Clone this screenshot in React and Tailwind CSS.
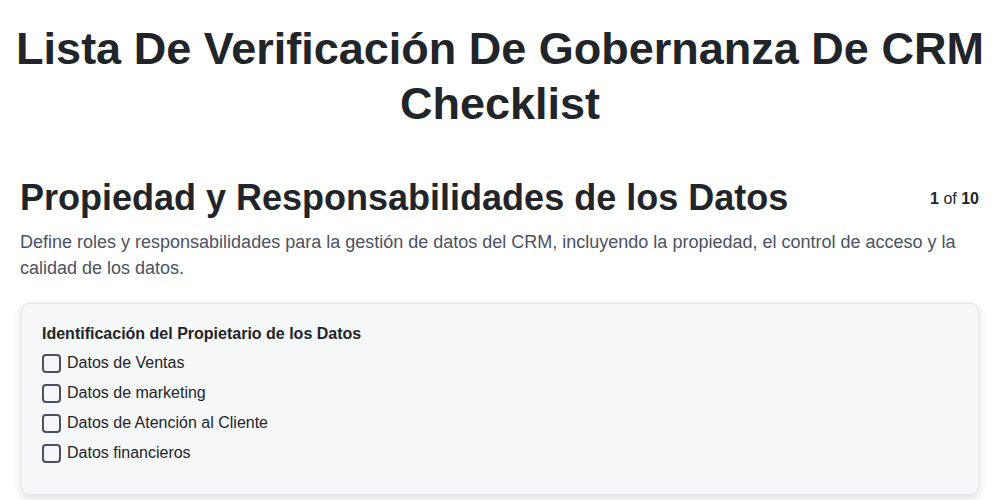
import React, { useState } from 'react';

const items = [
    'Datos de Ventas',
    'Datos de marketing',
    'Datos de Atención al Cliente',
    'Datos financieros',
];

function App() {
    const [checked, setChecked] = useState({});

    const toggle = (i) => setChecked({ ...checked, [i]: !checked[i] });

    return (
        <div className="min-h-screen bg-white text-[#212529] font-['Liberation_Sans',Arial,sans-serif]">
            <div className="px-[20px] pt-[21px]">
                <h1 className="-mx-[12px] text-center text-[45px] font-bold leading-[55px]">
                    Lista De Verificación De Gobernanza De CRM Checklist
                </h1>

                <div className="mt-[45px] flex items-center justify-between">
                    <h2 className="text-[36px] font-bold leading-[43px]">
                        Propiedad y Responsabilidades de los Datos
                    </h2>
                    <div className="text-[16px] pr-[1px] pt-[2px]">
                        <span className="font-bold">1</span> of <span className="font-bold">10</span>
                    </div>
                </div>
                <p className="mt-[10px] text-[18px] leading-[26px] text-[#4a5263]">
                    Define roles y responsabilidades para la gestión de datos del CRM, incluyendo la propiedad, el control de acceso y la calidad de los datos.
                </p>

                <div className="mt-[22px] mx-[1px] rounded-lg border border-[#e3e5ea] bg-[#f6f7f9] px-[20px] pt-[20px] pb-[26px] shadow-[0_3px_10px_rgba(0,0,0,0.14)]">
                    <div className="text-[16px] font-bold leading-[20px] text-[#212529]">
                        Identificación del Propietario de los Datos
                    </div>
                    <ul className="mt-[4px]">
                        {items.map((item, i) => (
                            <li key={item} className="flex h-[30px] items-center">
                                <button
                                    onClick={() => toggle(i)}
                                    className={`h-[19px] w-[19px] rounded-[4px] border-2 border-[#4b5061] ${checked[i] ? 'bg-[#4b5061]' : 'bg-transparent'}`}
                                />
                                <span className="ml-[6px] text-[16px]">{item}</span>
                            </li>
                        ))}
                    </ul>
                </div>
            </div>
        </div>
    );
}

export default App;
